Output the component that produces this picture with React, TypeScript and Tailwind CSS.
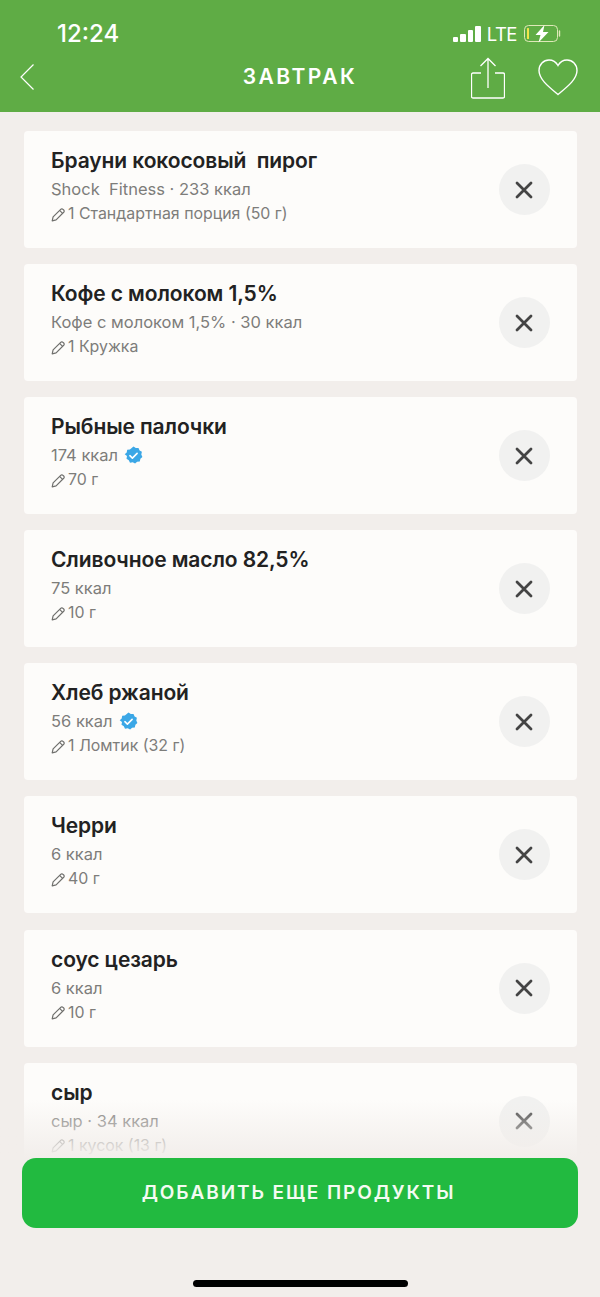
import React from 'react'

const items = [
  { title: 'Брауни кокосовый  пирог', sub: 'Shock  Fitness · 233 ккал', portion: '1 Стандартная порция (50 г)' },
  { title: 'Кофе с молоком 1,5%', sub: 'Кофе с молоком 1,5% · 30 ккал', portion: '1 Кружка' },
  { title: 'Рыбные палочки', sub: '174 ккал', portion: '70 г', verified: true },
  { title: 'Сливочное масло 82,5%', sub: '75 ккал', portion: '10 г' },
  { title: 'Хлеб ржаной', sub: '56 ккал', portion: '1 Ломтик (32 г)', verified: true },
  { title: 'Черри', sub: '6 ккал', portion: '40 г' },
  { title: 'соус цезарь', sub: '6 ккал', portion: '10 г' },
  { title: 'сыр', sub: 'сыр · 34 ккал', portion: '1 кусок (13 г)' },
]

const Pencil = () => (
  <svg width="15" height="15" viewBox="0 0 15 15" fill="none" stroke="#6f6f6c" strokeWidth="1.2" strokeLinejoin="round" className="shrink-0">
    <path d="M1.2 13.8l.9-3.9 7.6-7.6a1.6 1.6 0 0 1 2.3 0l.7.7a1.6 1.6 0 0 1 0 2.3l-7.6 7.6z" />
    <path d="M8.6 3.4l3 3" />
  </svg>
)

const Verified = () => (
  <svg width="19" height="19" viewBox="0 0 19 19" className="shrink-0">
    <path
      fill="#3ba7e6"
      d="M9.5.6l2.3 1.5 2.7-.2 1.1 2.5 2.3 1.4-.6 2.7 1.1 2.5-2 1.8-.6 2.7-2.7.3-2 1.8-2.4-1.3-2.7.4-1.2-2.5-2.3-1.4.5-2.7L.7 8.3l2-1.9.5-2.7 2.7-.3z"
    />
    <path d="M5.9 9.7l2.5 2.4 4.7-4.7" fill="none" stroke="#fff" strokeWidth="1.6" strokeLinecap="round" strokeLinejoin="round" />
  </svg>
)

const StatusIcons = () => (
  <div className="flex items-center">
    <div className="flex items-end gap-[2px]">
      <div className="h-[5px] w-[5.5px] rounded-[1px] bg-white" />
      <div className="h-[8px] w-[5.5px] rounded-[1px] bg-white" />
      <div className="h-[12px] w-[5.5px] rounded-[1px] bg-white" />
      <div className="h-[16px] w-[5.5px] rounded-[1px] bg-white" />
    </div>
    <span className="ml-[6px] text-[18.5px] leading-none tracking-[-0.5px] text-white">LTE</span>
    <svg width="40" height="20" viewBox="0 0 40 20" className="ml-[7px]" fill="none">
      <rect x="0.5" y="1.5" width="33" height="16" rx="4" stroke="#dfe8b8" strokeWidth="1" />
      <rect x="3" y="4" width="2" height="11" rx="0.5" fill="#f0e64a" />
      <path d="M35.5 7v5" stroke="#dfe8b8" strokeWidth="1.4" strokeLinecap="round" />
      <path d="M20.5 1L11.5 11h5l-2 7.5L24.5 8h-5.5z" fill="#fff" />
    </svg>
  </div>
)

const Header = () => (
  <header className="h-[112px] shrink-0 bg-[#5fac45] text-white">
    <div className="flex h-[54px] items-center justify-between pl-[57px] pr-[36px] pt-[14px]">
      <span className="text-[24px] font-medium leading-none">12:24</span>
      <StatusIcons />
    </div>
    <div className="relative flex h-[46px] items-center justify-center">
      <h1 className="text-[21px] font-semibold tracking-[2.500px]">ЗАВТРАК</h1>
      <svg width="16" height="28" viewBox="0 0 16 28" fill="none" stroke="#fff" strokeWidth="1.2" className="absolute left-[19px] top-[9px]">
        <path d="M14.5 1.5L2 14l12.5 12.5" />
      </svg>
      <svg width="34" height="42" viewBox="0 0 34 42" fill="none" stroke="#fff" strokeWidth="1.3" className="absolute left-[471px] top-[3px]">
        <path d="M10 16H2a1.5 1.5 0 0 0-1.5 1.500v22A1.5 1.5 0 0 0 2 41h30a1.500 1.500 0 0 0 1.500-1.500v-22A1.500 1.500 0 0 0 32 16h-8" />
        <path d="M17 31V1.500M9.500 9L17 1.500 24.500 9" />
      </svg>
      <svg width="40" height="37" viewBox="0 0 40 37" fill="none" stroke="#fff" strokeWidth="1.4" className="absolute left-[538px] top-[5px]">
        <path d="M20 35.500C11 28 1 20.500 1 11.500 1 5.500 5.500 1 11 1c3.800 0 7 2 9 5.500C22 3 25.200 1 29 1c5.500 0 10 4.500 10 10.500 0 9-10 16.500-19 24z" />
      </svg>
    </div>
  </header>
)

export default function App() {
  return (
    <div className="relative flex h-[1297px] w-[600px] flex-col overflow-hidden bg-[#f2eeeb] font-['Inter',sans-serif]">
      <Header />
      <div className="flex flex-col gap-[16.1px] overflow-hidden pl-[24px] pr-[23.500px] pt-[19px]">
        {items.map((item) => (
          <div key={item.title} className="flex h-[117px] shrink-0 items-center justify-between rounded-[4px] bg-[#fdfcfa] pl-[27px] pr-[27px]">
            <div className="-mt-[6px] flex min-w-0 flex-col">
              <div className="whitespace-pre text-[21px] font-semibold leading-[28px] tracking-[-0.1px] text-[#222222]">{item.title}</div>
              <div className="mt-[2px] flex items-center gap-[6px] text-[16.500px] leading-[24px] text-[#7d7d7a]">
                <span className="whitespace-pre">{item.sub}</span>
                {item.verified && <Verified />}
              </div>
              <div className="mt-[1px] flex items-center gap-[2px] text-[15.900px] leading-[24px] text-[#7d7d7a]">
                <Pencil />
                <span>{item.portion}</span>
              </div>
            </div>
            <button className="flex h-[51px] w-[51px] shrink-0 items-center justify-center rounded-full bg-[#f1f1f0]">
              <svg width="18" height="18" viewBox="0 0 18 18" fill="none" stroke="#444444" strokeWidth="2.800" strokeLinecap="round">
                <path d="M2 2l14 14M16 2L2 16" />
              </svg>
            </button>
          </div>
        ))}
      </div>

      {/* fade + bottom action */}
      <div className="absolute inset-x-0 bottom-0 h-[197px]">
        <div className="h-[58px] bg-gradient-to-b from-[#fdfcfa00] to-[#f2eeeb]" />
        <div className="h-[139px] bg-[#f2eeeb] px-[22px]">
          <button className="flex h-[70px] w-full items-center justify-center rounded-[14px] bg-[#22ba40] pr-[3px] text-[19px] font-semibold tracking-[1.900px] text-[#f4fbf2]">
            ДОБАВИТЬ ЕЩЕ ПРОДУКТЫ
          </button>
          <div className="mx-auto mt-[52px] h-[7px] w-[215px] rounded-full bg-black" />
        </div>
      </div>
    </div>
  )
}
